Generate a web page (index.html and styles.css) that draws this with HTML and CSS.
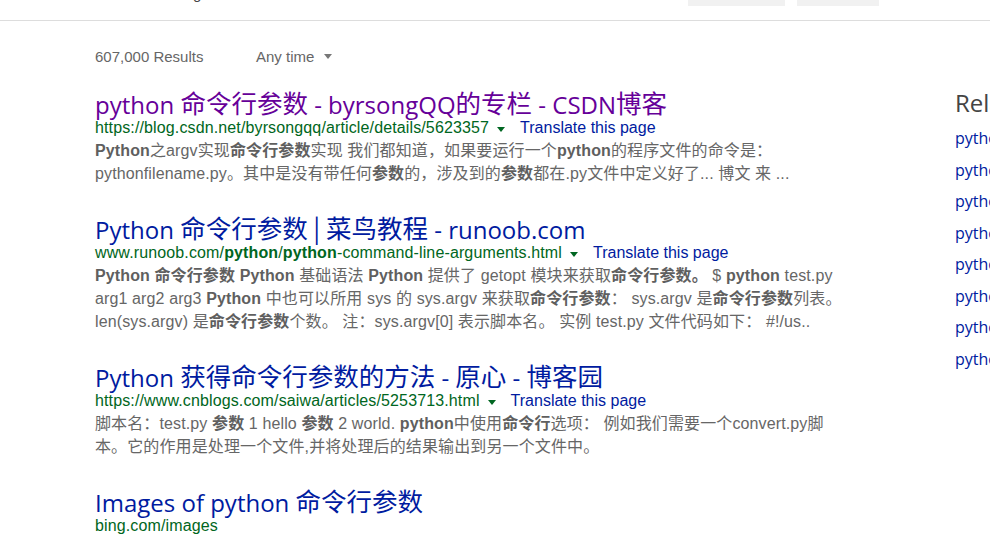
FILE: index.html
```html
<!DOCTYPE html>
<html lang="zh-CN">
<head>
<meta charset="utf-8">
<title>python 命令行参数 - Bing</title>
<link rel="stylesheet" href="styles.css">
</head>
<body>
<header class="scopebar">
  <nav class="tabs">
    <a class="tab active"><span class="tab-label">Web</span><span class="tab-underline"></span></a>
    <a class="tab tab-images"><span class="tab-label">Images</span></a>
  </nav>
  <div class="top-buttons">
    <span class="top-btn btn-a"></span>
    <span class="top-btn btn-b"></span>
  </div>
</header>

<div class="toolbar">
  <span class="count">607,000 Results</span>
  <span class="filter">Any time<span class="caret"></span></span>
</div>

<main class="layout">
  <ol class="results">
    <li class="result">
      <h2 class="title"><a class="visited">python <span class="han">命令行参数</span> - byrsongQQ<span class="han">的专栏</span> - CSDN<span class="han">博客</span></a></h2>
      <div class="url-row"><cite class="url">https://blog.csdn.net/byrsongqq/article/details/5623357</cite><span class="arrow"></span><a class="translate">Translate this page</a></div>
      <p class="snippet"><b>Python</b>之argv实现<b>命令行参数</b>实现 我们都知道，如果要运行一个<b>python</b>的程序文件的命令是：pythonfilename.py。其中是没有带任何<b>参数</b>的，涉及到的<b>参数</b>都在.py文件中定义好了... 博文 来 ...</p>
    </li>
    <li class="result">
      <h2 class="title"><a>Python <span class="han">命令行参数 | 菜鸟教程</span> - runoob.com</a></h2>
      <div class="url-row"><cite class="url">www.runoob.com/<strong>python</strong>/<strong>python</strong>-command-line-arguments.html</cite><span class="arrow"></span><a class="translate">Translate this page</a></div>
      <p class="snippet"><b>Python 命令行参数 Python</b> 基础语法 <b>Python</b> 提供了 getopt 模块来获取<b>命令行参数。</b> $ <b>python</b> test.py arg1 arg2 arg3 <b>Python</b> 中也可以所用 sys 的 sys.argv 来获取<b>命令行参数</b>： sys.argv 是<b>命令行参数</b>列表。 len(sys.argv) 是<b>命令行参数</b>个数。 注：sys.argv[0] 表示脚本名。 实例 test.py 文件代码如下： #!/us..</p>
    </li>
    <li class="result">
      <h2 class="title"><a>Python <span class="han">获得命令行参数的方法</span> - <span class="han">原心</span> - <span class="han">博客园</span></a></h2>
      <div class="url-row"><cite class="url">https://www.cnblogs.com/saiwa/articles/5253713.html</cite><span class="arrow"></span><a class="translate">Translate this page</a></div>
      <p class="snippet">脚本名：test.py <b>参数</b> 1 hello <b>参数</b> 2 world. <b>python</b>中使用<b>命令行</b>选项： 例如我们需要一个convert.py脚本。它的作用是处理一个文件,并将处理后的结果输出到另一个文件中。</p>
    </li>
    <li class="result">
      <h2 class="title"><a>Images of python <span class="han">命令行参数</span></a></h2>
      <div class="url-row"><cite class="url">bing.com/images</cite></div>
    </li>
  </ol>

  <aside class="related">
    <h2 class="related-title">Related searches</h2>
    <ul class="related-list">
      <li><a>python 命令行参数解析</a></li>
      <li><a>python 获取命令行参数</a></li>
      <li><a>python 命令行参数 argparse</a></li>
      <li><a>python 命令行参数传递</a></li>
      <li><a>python 脚本命令行参数</a></li>
      <li><a>python 命令行参数 sys.argv</a></li>
      <li><a>python 命令行参数 getopt</a></li>
      <li><a>python 带参数运行</a></li>
    </ul>
  </aside>
</main>
</body>
</html>
```

FILE: styles.css
```css
html, body {
  margin: 0;
  padding: 0;
  overflow: hidden;
  background: #fff;
}

body {
  width: 990px;
  height: 540px;
  font-family: "Liberation Sans", Arial, "Noto Sans CJK SC", sans-serif;
  color: #666;
}

a { text-decoration: none; cursor: pointer; }

/* ---------- top scope bar ---------- */
.scopebar {
  height: 20px;
  border-bottom: 1px solid #ddd;
  display: flex;
  justify-content: space-between;
  overflow: hidden;
}

.tabs {
  display: flex;
  padding-left: 70px;
}

.tab {
  display: flex;
  flex-direction: column;
  justify-content: flex-end;
  height: 20px;
  color: #444;
  font-size: 15px;
}

.tab.active {
  width: 71px;
  align-items: center;
}

.tab-label {
  display: block;
  line-height: 17px;
  margin-bottom: 18px;
}

.tab.active .tab-label {
  margin-bottom: 20px;
}

.tab-underline {
  display: block;
  width: 71px;
  height: 4px;
  margin-bottom: 1px;
  background: #d83b01;
}

.tab-images {
  padding-left: 27px;
}

.top-buttons {
  display: flex;
  align-items: flex-start;
  gap: 12px;
  margin-right: 111px;
}

.top-btn {
  display: block;
  height: 6px;
  background: #f1f1f1;
}

.btn-a { width: 97px; }
.btn-b { width: 82px; }

/* ---------- toolbar ---------- */
.toolbar {
  display: flex;
  align-items: center;
  padding-left: 95px;
  margin-top: 25px;
  height: 20px;
  font-size: 15px;
  color: #666;
}

.count {
  width: 161px;
}

.filter {
  display: flex;
  align-items: center;
}

.caret {
  width: 0;
  height: 0;
  margin-left: 10px;
  margin-top: 1px;
  border-left: 4px solid transparent;
  border-right: 4px solid transparent;
  border-top: 5px solid #777;
}

/* ---------- layout ---------- */
.layout {
  display: grid;
  grid-template-columns: 754px 240px;
  column-gap: 106px;
  padding-left: 95px;
  margin-top: 25px;
}

.results {
  list-style: none;
  margin: 0;
  padding: 0;
}

.result {
  margin-bottom: 31px;
}

.title {
  margin: 0;
  height: 26px;
  font-family: "Open Sans", "Noto Sans CJK SC", sans-serif;
  font-weight: 400;
  font-size: 24px;
  line-height: 22px;
  white-space: nowrap;
}

.title .han {
  font-family: "Noto Sans CJK SC", sans-serif;
  font-size: 25.5px;
  line-height: 22px;
  vertical-align: 1px;
}

.title a { color: #001ba0; }
.title a.visited { color: #660099; }

.url-row {
  display: flex;
  align-items: center;
  height: 22px;
  font-size: 16px;
  line-height: 22px;
}

.url {
  font-style: normal;
  color: #006621;
  letter-spacing: 0.13px;
  white-space: nowrap;
}

.url strong { font-weight: 700; }

.arrow {
  width: 0;
  height: 0;
  margin-left: 8px;
  margin-top: 2px;
  border-left: 4px solid transparent;
  border-right: 4px solid transparent;
  border-top: 5px solid #006621;
}

.translate {
  margin-left: 15px;
  color: #001ba0;
  white-space: nowrap;
}

.snippet {
  margin: 0;
  font-size: 16px;
  letter-spacing: 0.12px;
  line-height: 23px;
  color: #666;
}

.snippet b { font-weight: 700; color: #5f5f5f; }

/* ---------- related ---------- */
.related {
  white-space: nowrap;
}

.related-title {
  margin: 0 0 6px;
  height: 26px;
  font-family: "Open Sans", "Noto Sans CJK SC", sans-serif;
  font-weight: 400;
  font-size: 24px;
  line-height: 24px;
  color: #444;
}

.related-list {
  list-style: none;
  margin: 0;
  padding: 0;
}

.related-list li {
  height: 31.5px;
  line-height: 31.5px;
  font-family: "Open Sans", "Noto Sans CJK SC", sans-serif;
  font-size: 16px;
}

.related-list a { color: #001ba0; }
```
